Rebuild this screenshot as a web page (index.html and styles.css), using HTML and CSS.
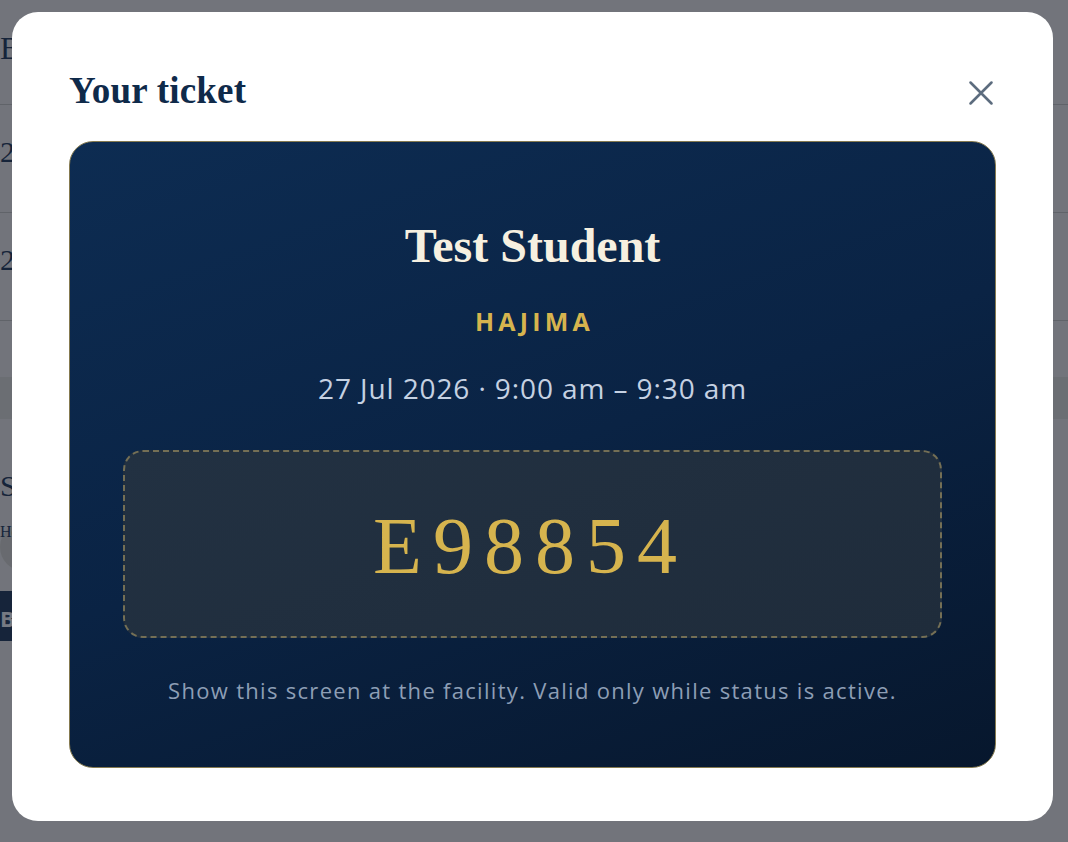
FILE: index.html
```html
<!DOCTYPE html>
<html lang="en">
<head>
  <meta charset="UTF-8" />
  <meta name="viewport" content="width=device-width, initial-scale=1.0"/>
  <title>Your ticket</title>
  <link rel="stylesheet" href="styles.css">
</head>
<body>
  <div class="page">
    <div class="page-head">Bookings</div>
    <div class="page-row">2</div>
    <div class="page-row">2</div>
    <div class="page-band"></div>
    <div class="page-section">
      <div class="page-sub">Schedule</div>
      <div class="page-pill">Hold</div>
      <div class="page-btn">Book</div>
    </div>
  </div>

  <div class="backdrop">
    <div class="modal">
      <div class="modal-head">
        <h2 class="modal-title">Your ticket</h2>
        <button class="close-btn" aria-label="Close">
          <svg width="28" height="28" viewBox="0 0 24 24" fill="none" stroke="currentColor" stroke-width="2.2" stroke-linecap="round">
            <path d="M3 3 L21 21 M21 3 L3 21"/>
          </svg>
        </button>
      </div>

      <div class="ticket">
        <div class="ticket-name">Test Student</div>
        <div class="ticket-facility">HAJIMA</div>
        <div class="ticket-time">27 Jul 2026 · 9:00 am – 9:30 am</div>
        <div class="code-box">
          <div class="code">E98854</div>
        </div>
        <div class="ticket-note">Show this screen at the facility. Valid only while status is active.</div>
      </div>
    </div>
  </div>
</body>
</html>
```

FILE: styles.css
```css
:root {
  --navy: #0f2a4a;
  --gold: #d6b44e;
  --cream: #f6f0e0;
  --serif: "Liberation Serif", "DejaVu Serif", serif;
  --sans: "Open Sans", "Lato", sans-serif;
}

* {
  box-sizing: border-box;
}

html, body {
  margin: 0;
  padding: 0;
  height: 100%;
  overflow: hidden;
  font-family: var(--sans);
}

body {
  background: #f4f1ea;
}

/* page behind the dialog */
.page {
  display: flex;
  flex-direction: column;
  height: 100%;
}

.page-head {
  height: 105px;
  padding: 30px 0 0 0;
  font-family: var(--serif);
  font-size: 32px;
  color: var(--navy);
  border-bottom: 1px solid #c9c6bd;
}

.page-row {
  height: 108px;
  padding: 30px 0 0 0;
  font-family: var(--serif);
  font-size: 30px;
  color: var(--navy);
  border-bottom: 1px solid #c9c6bd;
}

.page-band {
  height: 42px;
  margin-top: 56px;
  background: #e4e0d6;
}

.page-section {
  display: flex;
  flex-direction: column;
  gap: 20px;
  padding-top: 50px;
  font-family: var(--serif);
  color: var(--navy);
}

.page-sub {
  font-size: 30px;
}

.page-pill {
  width: 120px;
  height: 48px;
  border-radius: 24px;
  background: #dcd8cc;
}

.page-btn {
  width: 120px;
  height: 50px;
  background: var(--navy);
  color: #fff;
  font-family: var(--sans);
  font-weight: 700;
  font-size: 22px;
  padding: 12px 0 0 0;
}

/* dialog */
.backdrop {
  position: fixed;
  inset: 0;
  background: rgba(26, 34, 48, 0.6);
  padding: 12px 15px 21px 12px;
  display: flex;
}

.modal {
  flex: 1;
  background: #ffffff;
  border-radius: 26px;
  padding: 40px 57px 53px 57px;
  display: flex;
  flex-direction: column;
}

.modal-head {
  display: flex;
  justify-content: space-between;
  align-items: center;
  height: 89px;
  padding-bottom: 12px;
}

.modal-title {
  margin: 0;
  font-family: var(--serif);
  font-size: 37px;
  font-weight: 700;
  color: var(--navy);
  letter-spacing: 0.2px;
}

.close-btn {
  border: none;
  background: none;
  padding: 0;
  margin-right: 1px;
  margin-top: 4px;
  color: #5c6c7e;
  cursor: pointer;
  display: flex;
}

.ticket {
  flex: 1;
  border: 1.5px solid #857a50;
  border-radius: 24px;
  background: linear-gradient(160deg, #0d2c52 0%, #0a2344 50%, #07172d 100%);
  padding: 76px 53px 0 53px;
  display: flex;
  flex-direction: column;
  align-items: center;
}

.ticket-name {
  font-family: var(--serif);
  font-size: 48px;
  font-weight: 700;
  color: var(--cream);
  line-height: 56px;
}

.ticket-facility {
  margin-top: 32px;
  font-size: 25px;
  font-weight: 700;
  letter-spacing: 4.2px;
  padding-left: 4px;
  color: var(--gold);
  line-height: 30px;
}

.ticket-time {
  margin-top: 36px;
  font-size: 28px;
  letter-spacing: 0.9px;
  color: #c5d1e2;
  line-height: 32px;
}

.code-box {
  margin-top: 46px;
  width: 100%;
  height: 188px;
  border: 2px dashed #746f55;
  border-radius: 20px;
  background: linear-gradient(160deg, #223142 0%, #1f2c3b 100%);
  display: flex;
  align-items: center;
  justify-content: center;
}

.code {
  font-family: var(--serif);
  font-size: 80px;
  font-weight: 400;
  color: var(--gold);
  letter-spacing: 11px;
  padding-top: 4px;
  padding-right: 4px;
  font-variant-numeric: oldstyle-nums;
}

.ticket-note {
  margin-top: 38px;
  font-size: 22px;
  letter-spacing: 1.3px;
  color: #8d9eb5;
  line-height: 28px;
}
```
